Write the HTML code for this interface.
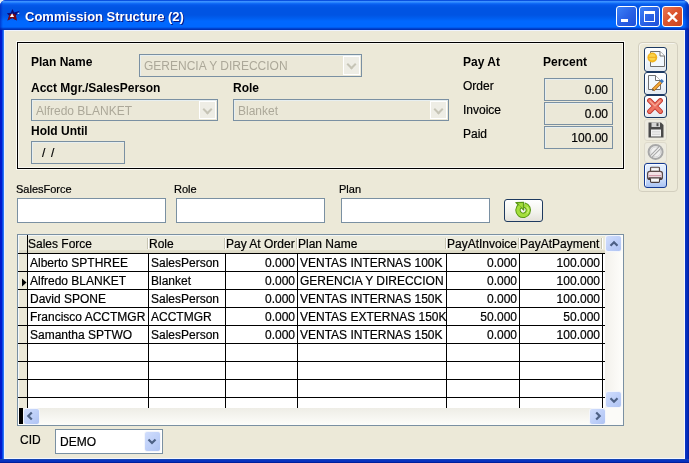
<!DOCTYPE html>
<html><head><meta charset="utf-8">
<style>
*{box-sizing:border-box;margin:0;padding:0}
html,body{width:689px;height:463px;overflow:hidden;background:#E8F0F6}
body{position:relative;will-change:transform;-webkit-text-stroke:0.2px currentColor;font-family:"Liberation Sans",sans-serif;font-size:11px;color:#000}
.a{position:absolute}
#win{left:0;top:0;width:689px;height:463px;border-radius:6px 7px 0 0;overflow:hidden;background:#0831D9}
#title{left:0;top:0;width:689px;height:30px;
background:linear-gradient(180deg,#0A50E0 0px,#0A50E0 1px,#3A8CFF 1px,#3D95FF 2px,#1470FA 3px,#0558EA 5px,#0054E3 8px,#0054E3 15px,#0060F2 19px,#0068FF 21px,#0068FF 27px,#0050E0 28px,#0038C0 29px,#0030B0 30px)}
#ttl{left:25px;top:9px;font-size:13px;font-weight:bold;color:#fff;text-shadow:1px 1px 0 #0A1883;white-space:nowrap}
#frameL{left:0;top:30px;width:4px;height:433px;background:linear-gradient(90deg,#0016C8 0px,#001CD2 2px,#0848E6 2px,#0848E6 3px,#2A74F6 3px,#2A74F6 4px)}
#frameR{left:685px;top:30px;width:4px;height:433px;background:linear-gradient(90deg,#0A36C8,#0630BE 1px,#0428B6 3px,#001A98 4px)}
#frameB{left:0;top:459px;width:689px;height:4px;background:linear-gradient(180deg,#1444B4 0px,#1444B4 1px,#0A34C0 1px,#0630BC 3px,#001E9C 3px,#001E9C 4px)}
#client{left:4px;top:30px;width:681px;height:429px;background:#ECE9D8;border:1px solid #F4F6FC;border-top-color:#F0F4FF;border-left-color:#E8F0FF}
.wb{width:21px;height:21px;top:6px;border:1px solid #fff;border-radius:3px}
.lbl{position:absolute;white-space:nowrap;font-size:11px}
.blbl{position:absolute;white-space:nowrap;font-size:12px;font-weight:bold}
.tb{position:absolute;border:1px solid #7A90A2;background:#fff}
.dis{background:#EBE8D8;color:#ACA899}

.cmb{border:1px solid #7A90A2;background:#EBE8D8;box-shadow:inset 1px 1px 0 #E6EEF0}
.cmb span{position:absolute;left:4px;top:4px;font-size:12px;color:#ACA899;white-space:nowrap}
.cmb i{position:absolute;right:1px;top:1px;bottom:1px;width:17px;border:1px solid #fff;background:#EEEDE5}
.cmb i:after{content:"";position:absolute;left:4px;top:3.5px;width:5px;height:5px;border-right:2.2px solid #C6C4B6;border-bottom:2.2px solid #C6C4B6;transform:rotate(45deg)}
.pbox{border:1px solid #7A90A2;background:#EBE8D8;box-shadow:inset 1px 1px 0 #E6EEF0}
.pbox span{position:absolute;top:4px;font-size:12px;white-space:nowrap}
.pbox span.r{right:4px}
.sbb{border:1px solid #F4F6FB;border-radius:3px;background:linear-gradient(135deg,#D0DDFC,#BCCEF8 60%,#AFC3F2)}
.tbtn{border:1px solid #1C3A63;border-radius:3px;background:linear-gradient(180deg,#FFFFFF,#F0F6FC 50%,#E4EAF0);box-shadow:inset 1px 1px 0 #fff}
.tbtnd{border:1px solid #DEDACB;border-radius:3px;background:#EDEBE0}
.tbtnh{border:1px solid #143A92;border-radius:3px;background:linear-gradient(180deg,#E6F0FE,#D2E2FB 60%,#A9C2F2);box-shadow:inset 1px 1px 0 #F8FBFF}
.blbl,#ttl,.cmb span{-webkit-text-stroke:0}
</style></head><body>
<div id="win" class="a">
  <div id="title" class="a"></div>
  <!-- icon star -->
  <svg class="a" style="left:4px;top:6px" width="20" height="18" viewBox="0 0 20 18">
    <polygon points="8.4,3 10.2,6.6 15.8,4.8 11.9,9.6 12.7,14.6 8.2,11.9 3.5,14.4 5.1,9.8 2.9,7.3 6.8,6.8" fill="#0C0C7A"/>
    <polygon points="6.2,8 10.8,8 11.9,9.6 12.7,14.6 8.2,11.9 3.5,14.4 5.1,9.8" fill="#7A0A14"/>
    <polygon points="8.1,7.2 10.1,10.9 5.9,10.9" fill="#FFFFFF"/>
    <rect x="13.6" y="6.8" width="1.6" height="1.2" fill="#C8E0FF"/>
  </svg>
  <div id="ttl" class="a">Commission Structure (2)</div>
  <!-- window buttons -->
  <div class="a wb" style="left:616px;background:linear-gradient(135deg,#3C82F8,#2A62E6 50%,#1F4FD8)">
    <div class="a" style="left:4px;top:12px;width:7px;height:3px;background:#fff"></div>
  </div>
  <div class="a wb" style="left:639px;background:linear-gradient(135deg,#3C82F8,#2A62E6 50%,#1F4FD8)">
    <div class="a" style="left:4px;top:4px;width:11px;height:11px;border:1px solid #fff;border-top-width:3px"></div>
  </div>
  <div class="a wb" style="left:662px;background:linear-gradient(135deg,#EC7654,#DC5530 45%,#CC4420)">
    <svg class="a" style="left:4px;top:5px" width="11" height="10" viewBox="0 0 11 10"><path d="M1,0.5 L10,9.5 M10,0.5 L1,9.5" stroke="#fff" stroke-width="2.4"/></svg>
  </div>
  <div class="a" style="left:684px;top:0;width:5px;height:30px;background:linear-gradient(90deg,rgba(0,40,180,0) 0px,rgba(0,30,170,0.35) 2px,rgba(0,20,150,0.6) 5px)"></div>
  <div class="a" style="left:0;top:0;width:3px;height:30px;background:linear-gradient(90deg,rgba(0,20,170,0.55),rgba(0,30,180,0.2) 2px,rgba(0,30,180,0) 3px)"></div>
  <div id="frameL" class="a"></div>
  <div id="frameR" class="a"></div>
  <div id="frameB" class="a"></div>
  <div id="client" class="a"></div>

  <!-- group box -->
  <div class="a" style="left:16px;top:41px;width:609px;height:129px;border:1px solid #FBFAF4"></div>
  <div class="a" style="left:17px;top:42px;width:607px;height:127px;border:1px solid #000"></div>
  <div class="a" style="left:18px;top:43px;width:605px;height:125px;border:1px solid #F8F7F0"></div>
  <div class="blbl" style="left:31px;top:55px">Plan Name</div>
  <div class="blbl" style="left:31px;top:81px">Acct Mgr./SalesPerson</div>
  <div class="blbl" style="left:233px;top:81px">Role</div>
  <div class="blbl" style="left:31px;top:124px">Hold Until</div>
  <div class="blbl" style="left:463px;top:55px">Pay At</div>
  <div class="blbl" style="left:543px;top:55px">Percent</div>
  <div class="lbl" style="left:463px;top:79px;font-size:12px">Order</div>
  <div class="lbl" style="left:463px;top:103px;font-size:12px">Invoice</div>
  <div class="lbl" style="left:463px;top:127px;font-size:12px">Paid</div>
  <!-- disabled combos -->
  <div class="a cmb" style="left:139px;top:54px;width:223px;height:23px"><span>GERENCIA Y DIRECCION</span><i></i></div>
  <div class="a cmb" style="left:31px;top:99px;width:187px;height:22px"><span>Alfredo BLANKET</span><i></i></div>
  <div class="a cmb" style="left:233px;top:99px;width:216px;height:22px"><span>Blanket</span><i></i></div>
  <div class="a pbox" style="left:31px;top:141px;width:94px;height:23px"><span style="left:10px">/</span><span style="left:19px">/</span></div>
  <div class="a pbox" style="left:544px;top:78px;width:69px;height:23px"><span class="r">0.00</span></div>
  <div class="a pbox" style="left:544px;top:102px;width:69px;height:23px"><span class="r">0.00</span></div>
  <div class="a pbox" style="left:544px;top:126px;width:69px;height:23px"><span class="r">100.00</span></div>

  <!-- filter -->
  <div class="lbl" style="left:16px;top:183px">SalesForce</div>
  <div class="lbl" style="left:174px;top:183px">Role</div>
  <div class="lbl" style="left:339px;top:183px">Plan</div>
  <div class="tb" style="left:17px;top:198px;width:149px;height:25px"></div>
  <div class="tb" style="left:176px;top:198px;width:149px;height:25px"></div>
  <div class="tb" style="left:341px;top:198px;width:149px;height:25px"></div>
  <div class="a" style="left:504px;top:199px;width:39px;height:23px;border:1px solid #1E3A5F;border-radius:3px;background:linear-gradient(180deg,#FFFFFF,#F2F2EC 60%,#E4E2DA)">
    <svg class="a" style="left:7px;top:0px" width="22" height="21" viewBox="0 0 22 21">
      <path d="M12.4,5.1 A5.2,5.2 0 1 1 8.0,6.0" fill="none" stroke="#5A9814" stroke-width="5.4"/>
      <polygon points="3.9,2.5 11.7,2.3 11.7,10.1" fill="#5A9814" stroke="#5A9814" stroke-width="1.1" stroke-linejoin="round"/>
      <path d="M12.4,5.1 A5.2,5.2 0 1 1 8.0,6.0" fill="none" stroke="#A4DE3C" stroke-width="3.4"/>
      <polygon points="5.6,3.2 10.9,3.1 10.9,8.4" fill="#A4DE3C"/>
      <path d="M14.6,7 A3.8,3.8 0 0 1 14.8,13.4" fill="none" stroke="#CCF57A" stroke-width="1.1"/>
    </svg>
  </div>
<!-- GRID -->
<div class="a" style="left:17px;top:234px;width:607px;height:192px;border:1px solid #7A90A2;background:#fff"></div>
<div class="a" style="left:18px;top:235px;width:1px;height:173px;background:#F4F8FC"></div>
<div class="a" style="left:19px;top:235px;width:586px;height:18px;background:linear-gradient(180deg,#F2F6F6 0px,#F2F6F6 1px,#EBEADB 1px,#EBEADB 15px,#E2DFCC 15px,#D9D6C3 18px)"></div>
<div class="a" style="left:19px;top:253px;width:8px;height:155px;background:#ECE9D8"></div>
<div class="a" style="left:18px;top:253px;width:587px;height:1px;background:#000"></div>
<div class="a" style="left:18px;top:271px;width:587px;height:1px;background:#000"></div>
<div class="a" style="left:18px;top:289px;width:587px;height:1px;background:#000"></div>
<div class="a" style="left:18px;top:307px;width:587px;height:1px;background:#000"></div>
<div class="a" style="left:18px;top:325px;width:587px;height:1px;background:#000"></div>
<div class="a" style="left:18px;top:343px;width:587px;height:1px;background:#000"></div>
<div class="a" style="left:18px;top:361px;width:587px;height:1px;background:#000"></div>
<div class="a" style="left:18px;top:379px;width:587px;height:1px;background:#000"></div>
<div class="a" style="left:18px;top:397px;width:587px;height:1px;background:#000"></div>
<div class="a" style="left:27px;top:235px;width:1px;height:173px;background:#000"></div>
<div class="a" style="left:148px;top:253px;width:1px;height:155px;background:#000"></div>
<div class="a" style="left:225px;top:253px;width:1px;height:155px;background:#000"></div>
<div class="a" style="left:297px;top:253px;width:1px;height:155px;background:#000"></div>
<div class="a" style="left:446px;top:253px;width:1px;height:155px;background:#000"></div>
<div class="a" style="left:519px;top:253px;width:1px;height:155px;background:#000"></div>
<div class="a" style="left:602px;top:253px;width:1px;height:155px;background:#000"></div>
<div class="a" style="left:147px;top:238px;width:1px;height:11px;background:#C7C5B2"></div>
<div class="a" style="left:148px;top:238px;width:1px;height:11px;background:#FFFFFF"></div>
<div class="a" style="left:224px;top:238px;width:1px;height:11px;background:#C7C5B2"></div>
<div class="a" style="left:225px;top:238px;width:1px;height:11px;background:#FFFFFF"></div>
<div class="a" style="left:296px;top:238px;width:1px;height:11px;background:#C7C5B2"></div>
<div class="a" style="left:297px;top:238px;width:1px;height:11px;background:#FFFFFF"></div>
<div class="a" style="left:445px;top:238px;width:1px;height:11px;background:#C7C5B2"></div>
<div class="a" style="left:446px;top:238px;width:1px;height:11px;background:#FFFFFF"></div>
<div class="a" style="left:518px;top:238px;width:1px;height:11px;background:#C7C5B2"></div>
<div class="a" style="left:519px;top:238px;width:1px;height:11px;background:#FFFFFF"></div>
<div class="a" style="left:601px;top:238px;width:1px;height:11px;background:#C7C5B2"></div>
<div class="a" style="left:602px;top:238px;width:1px;height:11px;background:#FFFFFF"></div>
<div class="a" style="left:28px;top:237px;font-size:12px;white-space:nowrap">Sales Force</div>
<div class="a" style="left:149px;top:237px;font-size:12px;white-space:nowrap">Role</div>
<div class="a" style="left:226px;top:237px;font-size:12px;white-space:nowrap">Pay At Order</div>
<div class="a" style="left:298px;top:237px;font-size:12px;white-space:nowrap">Plan Name</div>
<div class="a" style="left:447px;top:237px;font-size:12px;white-space:nowrap">PayAtInvoice</div>
<div class="a" style="left:520px;top:237px;font-size:12px;white-space:nowrap">PayAtPayment</div>
<div class="a" style="left:30px;top:256px;font-size:12px;white-space:nowrap">Alberto SPTHREE</div>
<div class="a" style="left:151px;top:256px;font-size:12px;white-space:nowrap">SalesPerson</div>
<div class="a" style="left:226px;width:69px;text-align:right;top:256px;font-size:12px;white-space:nowrap">0.000</div>
<div class="a" style="left:300px;top:256px;font-size:12px;white-space:nowrap">VENTAS INTERNAS 100K</div>
<div class="a" style="left:447px;width:70px;text-align:right;top:256px;font-size:12px;white-space:nowrap">0.000</div>
<div class="a" style="left:520px;width:80px;text-align:right;top:256px;font-size:12px;white-space:nowrap">100.000</div>
<div class="a" style="left:30px;top:274px;font-size:12px;white-space:nowrap">Alfredo BLANKET</div>
<div class="a" style="left:151px;top:274px;font-size:12px;white-space:nowrap">Blanket</div>
<div class="a" style="left:226px;width:69px;text-align:right;top:274px;font-size:12px;white-space:nowrap">0.000</div>
<div class="a" style="left:300px;top:274px;font-size:12px;white-space:nowrap">GERENCIA Y DIRECCION</div>
<div class="a" style="left:447px;width:70px;text-align:right;top:274px;font-size:12px;white-space:nowrap">0.000</div>
<div class="a" style="left:520px;width:80px;text-align:right;top:274px;font-size:12px;white-space:nowrap">100.000</div>
<div class="a" style="left:30px;top:292px;font-size:12px;white-space:nowrap">David SPONE</div>
<div class="a" style="left:151px;top:292px;font-size:12px;white-space:nowrap">SalesPerson</div>
<div class="a" style="left:226px;width:69px;text-align:right;top:292px;font-size:12px;white-space:nowrap">0.000</div>
<div class="a" style="left:300px;top:292px;font-size:12px;white-space:nowrap">VENTAS INTERNAS 150K</div>
<div class="a" style="left:447px;width:70px;text-align:right;top:292px;font-size:12px;white-space:nowrap">0.000</div>
<div class="a" style="left:520px;width:80px;text-align:right;top:292px;font-size:12px;white-space:nowrap">100.000</div>
<div class="a" style="left:30px;top:310px;font-size:12px;white-space:nowrap">Francisco ACCTMGR</div>
<div class="a" style="left:151px;top:310px;font-size:12px;white-space:nowrap">ACCTMGR</div>
<div class="a" style="left:226px;width:69px;text-align:right;top:310px;font-size:12px;white-space:nowrap">0.000</div>
<div class="a" style="left:300px;top:310px;font-size:12px;white-space:nowrap">VENTAS EXTERNAS 150K</div>
<div class="a" style="left:447px;width:70px;text-align:right;top:310px;font-size:12px;white-space:nowrap">50.000</div>
<div class="a" style="left:520px;width:80px;text-align:right;top:310px;font-size:12px;white-space:nowrap">50.000</div>
<div class="a" style="left:30px;top:328px;font-size:12px;white-space:nowrap">Samantha SPTWO</div>
<div class="a" style="left:151px;top:328px;font-size:12px;white-space:nowrap">SalesPerson</div>
<div class="a" style="left:226px;width:69px;text-align:right;top:328px;font-size:12px;white-space:nowrap">0.000</div>
<div class="a" style="left:300px;top:328px;font-size:12px;white-space:nowrap">VENTAS INTERNAS 150K</div>
<div class="a" style="left:447px;width:70px;text-align:right;top:328px;font-size:12px;white-space:nowrap">0.000</div>
<div class="a" style="left:520px;width:80px;text-align:right;top:328px;font-size:12px;white-space:nowrap">100.000</div>
<svg class="a" style="left:22px;top:278px" width="5" height="9" viewBox="0 0 5 9"><polygon points="0,0.5 4.5,4.5 0,8.5" fill="#000"/></svg>
<div class="a" style="left:605px;top:235px;width:18px;height:173px;background:linear-gradient(90deg,#F3F1EC,#FEFEFB)"></div>
<div class="a" style="left:19px;top:408px;width:586px;height:17px;background:linear-gradient(180deg,#EEEDE6,#FDFDFA)"></div>
<div class="a" style="left:605px;top:408px;width:18px;height:17px;background:#FBFBF8"></div>
<div class="a" style="left:19px;top:408px;width:4px;height:16px;background:#000"></div>
<div class="a sbb" style="left:605px;top:235px;width:17px;height:17px"><svg class="a" style="left:2px;top:2px" width="12" height="12" viewBox="-6 -6 12 12"><path d="M-3.5,1.8 L0,-1.7 L3.5,1.8" fill="none" stroke="#4D6185" stroke-width="2.2"/></svg></div>
<div class="a sbb" style="left:605px;top:391px;width:17px;height:17px"><svg class="a" style="left:2px;top:2px" width="12" height="12" viewBox="-6 -6 12 12"><path d="M-3.5,-1.8 L0,1.7 L3.5,-1.8" fill="none" stroke="#4D6185" stroke-width="2.2"/></svg></div>
<div class="a sbb" style="left:23px;top:408px;width:17px;height:17px"><svg class="a" style="left:0px;top:1px" width="12" height="12" viewBox="-6 -6 12 12"><path d="M1.8,-3.5 L-1.7,0 L1.8,3.5" fill="none" stroke="#4D6185" stroke-width="2.2"/></svg></div>
<div class="a sbb" style="left:589px;top:408px;width:17px;height:17px"><svg class="a" style="left:2px;top:1px" width="12" height="12" viewBox="-6 -6 12 12"><path d="M-1.8,-3.5 L1.7,0 L-1.8,3.5" fill="none" stroke="#4D6185" stroke-width="2.2"/></svg></div>
<!-- /GRID -->


<!-- TOOL -->
  <div class="a" style="left:638px;top:42px;width:40px;height:150px;border:1px solid #D3CFBF;border-radius:4px;box-shadow:inset 1px 1px 0 #F6F5EE"></div>
  <div class="a tbtn" style="left:644px;top:47px;width:23px;height:25px">
    <svg class="a" style="left:2px;top:2px" width="19" height="21" viewBox="0 0 19 21">
      <path d="M3.5,1.5 H13 L17.5,6 V16.5 H3.5 Z" fill="#F2F8FE" stroke="#707070" stroke-width="1"/>
      <path d="M13,1.5 V6 H17.5" fill="#fff" stroke="#707070" stroke-width="1"/>
      <circle cx="5.3" cy="7.5" r="4.9" fill="#F2B51E"/>
      <circle cx="5.3" cy="7.2" r="3.2" fill="#FBD34A"/>
      <rect x="1.5" y="6.8" width="7.5" height="1.1" fill="#EFA514" opacity="0.8"/>
    </svg>
  </div>
  <div class="a tbtn" style="left:644px;top:72px;width:23px;height:23px">
    <svg class="a" style="left:2px;top:1px" width="19" height="21" viewBox="0 0 19 21">
      <path d="M1.5,1.5 H8.5 L13.5,6.5 V15.5 H1.5 Z" fill="#F2F8FE" stroke="#707070" stroke-width="1"/>
      <path d="M8.5,1.5 V6.5 H13.5" fill="#fff" stroke="#707070" stroke-width="1"/>
      <path d="M6,16 L14.2,7.8" stroke="#A85A08" stroke-width="3.2"/>
      <path d="M6,16 L14.2,7.8" stroke="#F5AE3C" stroke-width="1.8"/>
      <path d="M13.8,8.2 L15.8,6.2" stroke="#3A78C0" stroke-width="3.2"/>
      <path d="M5.4,16.6 L6.6,15.4" stroke="#444" stroke-width="1.4"/>
    </svg>
  </div>
  <div class="a tbtn" style="left:644px;top:95px;width:23px;height:23px">
    <svg class="a" style="left:2px;top:2px" width="19" height="19" viewBox="0 0 19 19">
      <path d="M2.6,2.6 L13.4,13.4 M13.4,2.6 L2.6,13.4" stroke="#C43A30" stroke-width="5" stroke-linecap="round"/>
      <path d="M2.6,2.6 L13.4,13.4 M13.4,2.6 L2.6,13.4" stroke="#EE7462" stroke-width="3.2" stroke-linecap="round"/>
      <path d="M3,3 L8,8 L13,3" fill="none" stroke="#F6A694" stroke-width="1.2" stroke-linecap="round"/>
    </svg>
  </div>
  <div class="a tbtnd" style="left:644px;top:119px;width:23px;height:22px">
    <svg class="a" style="left:2px;top:1px" width="19" height="19" viewBox="0 0 19 19">
      <path d="M1.5,1.5 H14 L16.5,4 V16.5 H1.5 Z" fill="#4A4A4A"/>
      <rect x="4.5" y="1.5" width="8.5" height="4.5" fill="#D4D4D4"/>
      <rect x="9.5" y="2.2" width="2" height="3" fill="#4A4A4A"/>
      <rect x="4" y="8.5" width="10" height="7" fill="#F2F2F2"/>
      <rect x="5" y="10.5" width="8" height="0.8" fill="#C8C8C8"/>
      <rect x="5" y="12.8" width="8" height="0.8" fill="#C8C8C8"/>
    </svg>
  </div>
  <div class="a tbtnd" style="left:644px;top:142px;width:23px;height:21px">
    <svg class="a" style="left:2px;top:0px" width="19" height="19" viewBox="0 0 19 19">
      <circle cx="8.6" cy="8.9" r="7" fill="#F0F0F0" stroke="#A8A8A8" stroke-width="2"/>
      <circle cx="8.6" cy="8.9" r="5" fill="none" stroke="#D4D4D4" stroke-width="1"/>
      <path d="M4.2,13.3 L13,4.5" stroke="#A8A8A8" stroke-width="3.2"/>
      <path d="M4.2,13.3 L13,4.5" stroke="#F4F4F4" stroke-width="1.1"/>
    </svg>
  </div>
  <div class="a tbtnh" style="left:644px;top:163px;width:23px;height:25px">
    <svg class="a" style="left:2px;top:2px" width="19" height="21" viewBox="0 0 19 21">
      <path d="M3.5,5.5 V2 Q3.5,1.2 4.5,1.2 H11.5 Q12.5,1.2 12.5,2 V5.5" fill="#E4E4E4" stroke="#5A4A48" stroke-width="1.1"/>
      <rect x="5" y="2.6" width="6" height="1.6" fill="#FAFAFA"/>
      <path d="M0.6,7.5 Q0.6,5.3 2.8,5.3 H13.2 Q15.4,5.3 15.4,7.5 V11.5 Q15.4,13.5 13,13.5 H3 Q0.6,13.5 0.6,11.5 Z" fill="#F3E2E6" stroke="#5A4A48" stroke-width="1.2"/>
      <rect x="2" y="9" width="12" height="1.2" fill="#D49AAA"/>
      <rect x="1.2" y="11.2" width="13.6" height="2.6" rx="1" fill="#4A3C3C"/>
      <path d="M3.5,12.5 V15.5 Q3.5,16.4 4.5,16.4 H11.5 Q12.5,16.4 12.5,15.5 V12.5" fill="#F8F8F8" stroke="#4A3C3C" stroke-width="1.1"/>
    </svg>
  </div>
<!-- /TOOL -->
<!-- CID -->
  <div class="lbl" style="left:20px;top:433px;font-size:12px">CID</div>
  <div class="a" style="left:55px;top:429px;width:108px;height:25px;border:1px solid #7A90A2;background:#fff">
    <div class="a" style="left:4px;top:5px;font-size:12px;white-space:nowrap">DEMO</div>
    <div class="a sbb" style="left:88px;top:1px;width:17px;height:21px"><svg class="a" style="left:1px;top:4px" width="12" height="12" viewBox="0 0 12 12"><path d="M2.5,3.5 L6,7 L9.5,3.5" fill="none" stroke="#4D6185" stroke-width="2.2"/></svg></div>
  </div>
<!-- /CID -->
</div>
</body></html>
